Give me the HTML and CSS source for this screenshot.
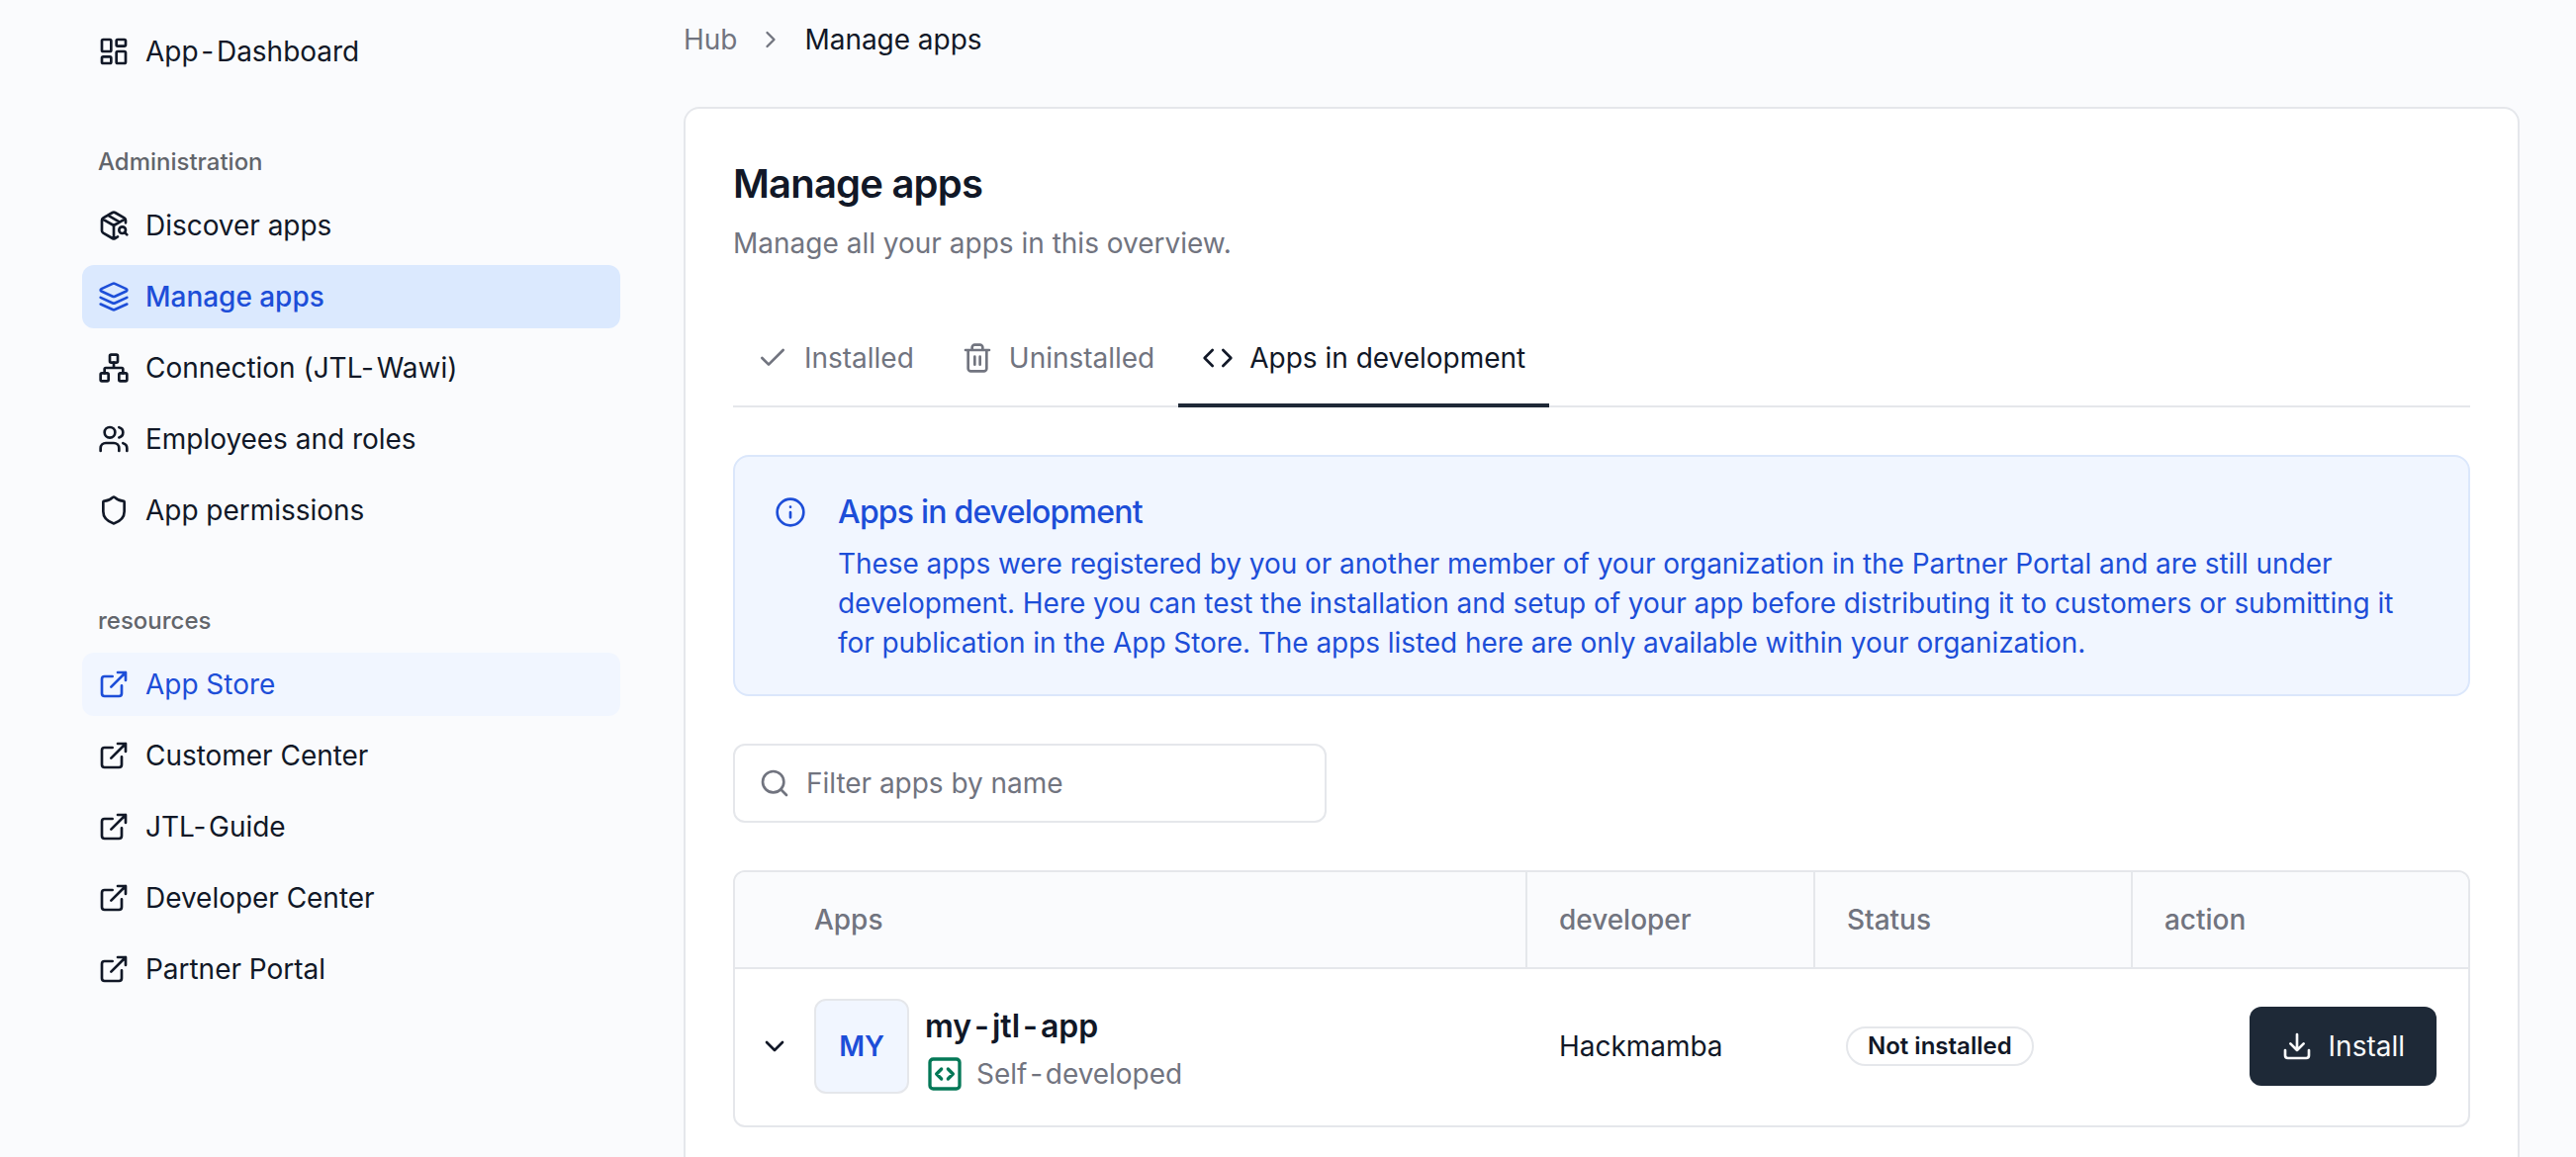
FILE: index.html
```html
<!DOCTYPE html>
<html lang="en">

<head>
    <meta charset="UTF-8">
    <meta name="viewport" content="width=device-width, initial-scale=1.0">
    <title>Manage apps</title>
    <link rel="stylesheet" href="styles.css">
</head>

<body>
    <!-- Shared icon shapes -->
    <svg class="sprite" aria-hidden="true">
        <symbol id="external" viewBox="0 0 24 24">
            <path d="M15 3h6v6M10 14 21 3M18 13v6a2 2 0 0 1-2 2H5a2 2 0 0 1-2-2V8a2 2 0 0 1 2-2h6" />
        </symbol>
    </svg>

    <aside class="sidebar">
        <nav class="nav-group">
            <a class="nav-item">
                <svg class="icon" viewBox="0 0 24 24"><rect x="3" y="3" width="7" height="9" rx="1" /><rect x="14" y="3" width="7" height="5" rx="1" /><rect x="14" y="12" width="7" height="9" rx="1" /><rect x="3" y="16" width="7" height="5" rx="1" /></svg>
                <span>App<span class="hyphen">-</span>Dashboard</span>
            </a>
        </nav>
        <nav class="nav-group">
            <div class="nav-label">Administration</div>
            <a class="nav-item">
                <svg class="icon" viewBox="0 0 24 24"><path d="M21 10V8a2 2 0 0 0-1-1.73l-7-4a2 2 0 0 0-2 0l-7 4A2 2 0 0 0 3 8v8a2 2 0 0 0 1 1.73l7 4a2 2 0 0 0 2 0l2-1.14M7.5 4.27l9 5.15M3.29 7 12 12l8.71-5M12 22V12" /><circle cx="18.5" cy="15.5" r="2.5" /><path d="M20.27 17.27 22 19" /></svg>
                <span>Discover apps</span>
            </a>
            <a class="nav-item active">
                <svg class="icon" viewBox="0 0 24 24"><path d="m12.83 2.18a2 2 0 0 0-1.66 0L2.6 6.08a1 1 0 0 0 0 1.83l8.58 3.91a2 2 0 0 0 1.66 0l8.58-3.9a1 1 0 0 0 0-1.83Z" /><path d="m22 17.65-9.17 4.16a2 2 0 0 1-1.66 0L2 17.65" /><path d="m22 12.65-9.17 4.16a2 2 0 0 1-1.66 0L2 12.65" /></svg>
                <span>Manage apps</span>
            </a>
            <a class="nav-item">
                <svg class="icon" viewBox="0 0 24 24"><rect x="16" y="16" width="6" height="6" rx="1" /><rect x="2" y="16" width="6" height="6" rx="1" /><rect x="9" y="2" width="6" height="6" rx="1" /><path d="M5 16v-3a1 1 0 0 1 1-1h12a1 1 0 0 1 1 1v3M12 12V8" /></svg>
                <span>Connection (JTL<span class="hyphen tight">-</span>Wawi)</span>
            </a>
            <a class="nav-item">
                <svg class="icon" viewBox="0 0 24 24"><path d="M16 21v-2a4 4 0 0 0-4-4H6a4 4 0 0 0-4 4v2" /><circle cx="9" cy="7" r="4" /><path d="M22 21v-2a4 4 0 0 0-3-3.87M16 3.13a4 4 0 0 1 0 7.75" /></svg>
                <span>Employees and roles</span>
            </a>
            <a class="nav-item">
                <svg class="icon" viewBox="0 0 24 24"><path d="M20 13c0 5-3.5 7.5-7.66 8.95a1 1 0 0 1-.67-.01C7.5 20.5 4 18 4 13V6a1 1 0 0 1 1-1c2 0 4.5-1.2 6.24-2.72a1.17 1.17 0 0 1 1.52 0C14.51 3.81 17 5 19 5a1 1 0 0 1 1 1z" /></svg>
                <span>App permissions</span>
            </a>
        </nav>
        <nav class="nav-group">
            <div class="nav-label">resources</div>
            <a class="nav-item hovered"><svg class="icon"><use href="#external" /></svg><span>App Store</span></a>
            <a class="nav-item"><svg class="icon"><use href="#external" /></svg><span>Customer Center</span></a>
            <a class="nav-item"><svg class="icon"><use href="#external" /></svg><span>JTL<span class="hyphen tight">-</span>Guide</span></a>
            <a class="nav-item"><svg class="icon"><use href="#external" /></svg><span>Developer Center</span></a>
            <a class="nav-item"><svg class="icon"><use href="#external" /></svg><span>Partner Portal</span></a>
        </nav>
    </aside>

    <main>
        <div class="breadcrumb">
            <span class="muted">Hub</span>
            <svg class="icon small muted" viewBox="0 0 24 24"><path d="m9 18 6-6-6-6" /></svg>
            <span>Manage apps</span>
        </div>

        <section class="card">
            <h1>Manage apps</h1>
            <p class="subtitle">Manage all your apps in this overview.</p>

            <div class="tabs">
                <div class="tab">
                    <svg class="icon" viewBox="0 0 24 24"><path d="M20 6 9 17l-5-5" /></svg>
                    <span>Installed</span>
                </div>
                <div class="tab">
                    <svg class="icon" viewBox="0 0 24 24"><path d="M3 6h18M19 6v14c0 1-1 2-2 2H7c-1 0-2-1-2-2V6M8 6V4c0-1 1-2 2-2h4c1 0 2 1 2 2v2M10 11v6M14 11v6" /></svg>
                    <span>Uninstalled</span>
                </div>
                <div class="tab selected">
                    <svg class="icon" viewBox="0 0 24 24"><path d="m16 18 6-6-6-6M8 6l-6 6 6 6" /></svg>
                    <span>Apps in development</span>
                </div>
            </div>

            <div class="alert">
                <svg class="icon" viewBox="0 0 24 24"><circle cx="12" cy="12" r="10" /><path d="M12 16v-4M12 8h.01" /></svg>
                <div>
                    <h2>Apps in development</h2>
                    <p>These apps were registered by you or another member of your organization in the Partner Portal and are still under development. Here you can test the installation and setup of your app before distributing it to customers or submitting it for publication in the App Store. The apps listed here are only available within your organization.</p>
                </div>
            </div>

            <div class="search">
                <svg class="icon" viewBox="0 0 24 24"><circle cx="11" cy="11" r="8" /><path d="m21 21-4.3-4.3" /></svg>
                <span>Filter apps by name</span>
            </div>

            <div class="table">
                <div class="row head">
                    <div class="cell first">Apps</div>
                    <div class="cell">developer</div>
                    <div class="cell">Status</div>
                    <div class="cell">action</div>
                </div>
                <div class="row">
                    <div class="cell app">
                        <svg class="icon" viewBox="0 0 24 24"><path d="m6 9 6 6 6-6" /></svg>
                        <div class="avatar">MY</div>
                        <div class="app-info">
                            <div class="app-name">my<span class="hyphen">-</span>jtl<span class="hyphen">-</span>app</div>
                            <div class="app-origin">
                                <svg class="icon large" viewBox="0 0 24 24"><path d="m10 9-3 3 3 3M14 15l3-3-3-3" /><rect x="3" y="3" width="18" height="18" rx="2" /></svg>
                                <span>Self<span class="hyphen">-</span>developed</span>
                            </div>
                        </div>
                    </div>
                    <div class="cell">Hackmamba</div>
                    <div class="cell"><span class="badge">Not installed</span></div>
                    <div class="cell action">
                        <button class="btn">
                            <svg class="icon" viewBox="0 0 24 24"><path d="M21 15v4a2 2 0 0 1-2 2H5a2 2 0 0 1-2-2v-4M7 10l5 5 5-5M12 15V3" /></svg>
                            <span>Install</span>
                        </button>
                    </div>
                </div>
            </div>
        </section>
    </main>
</body>

</html>
```

FILE: styles.css
```css
/* General Reset */
* {
    margin: 0;
    padding: 0;
    box-sizing: border-box;
}

body {
    font-family: Inter, sans-serif;
    font-size: 28px;
    line-height: 40px;
    letter-spacing: -0.03px;
    background: #fafbfd;
    color: #111827;
    display: flex;
    height: 100vh;
    overflow: hidden;
}

.sprite {
    display: none;
}

.icon {
    width: 32px;
    height: 32px;
    flex-shrink: 0;
    fill: none;
    stroke: currentColor;
    stroke-width: 2;
    stroke-linecap: round;
    stroke-linejoin: round;
}

.icon.small {
    width: 28px;
    height: 28px;
}

.icon.large {
    width: 40px;
    height: 40px;
}

.muted {
    color: #71747f;
}

.hyphen {
    margin: 0 0.1em;
}

/* After a capital L the gap is already wide enough */
.hyphen.tight {
    margin-left: 0;
}

/* Sidebar */
.sidebar {
    width: 627px;
    flex-shrink: 0;
    padding: 20px 0 0 83px;
    display: flex;
    flex-direction: column;
    gap: 48px;
}

.nav-item {
    display: flex;
    align-items: center;
    gap: 16px;
    height: 64px;
    padding: 0 16px;
    margin-bottom: 8px;
    border-radius: 12px;
}

.nav-item:last-child {
    margin-bottom: 0;
}

.nav-item.active {
    background: #dbe9fe;
    color: #1d4ed8;
    font-weight: 500;
}

.nav-item.hovered {
    background: #f1f6ff;
    color: #1d4ed8;
}

.nav-label {
    padding: 0 16px;
    font-size: 24px;
    font-weight: 500;
    line-height: 64px;
    letter-spacing: 0;
    color: #62656b;
}

/* Main column */
main {
    width: 1856px;
    margin-left: 64px;
    padding-top: 20px;
    display: flex;
    flex-direction: column;
}

.breadcrumb {
    display: flex;
    align-items: center;
    gap: 20px;
    height: 40px;
    margin-bottom: 48px;
}

.card {
    flex: 1;
    padding: 48px 48px 0;
    background: #fff;
    border: 2px solid #e5e7eb;
    border-bottom: none;
    border-radius: 16px 16px 0 0;
}

h1 {
    font-size: 40px;
    font-weight: 600;
    line-height: 56px;
    letter-spacing: -0.02em;
}

.subtitle {
    margin-top: 12px;
    letter-spacing: 0;
    color: #71747f;
}

/* Tabs */
.tabs {
    display: flex;
    height: 100px;
    margin: 46px 0 48px;
    box-shadow: inset 0 -2px #e5e7eb;
    letter-spacing: -0.01px;
    color: #71747f;
}

.tab {
    display: flex;
    align-items: center;
    gap: 16px;
    padding: 0 24px;
}

.tab.selected {
    color: #111827;
    box-shadow: inset 0 -4px #1f2937;
}

/* Info box */
.alert {
    display: flex;
    gap: 32px;
    padding: 32px 40px;
    background: #f1f6ff;
    border: 2px solid #dbe7fb;
    border-radius: 16px;
    color: #1d4ed8;
}

.alert .icon {
    margin-top: 8px;
}

.alert h2 {
    font-size: 32px;
    font-weight: 500;
    line-height: 48px;
    letter-spacing: -0.025em;
    margin-bottom: 8px;
}

.alert p {
    letter-spacing: -0.06px;
}

.search {
    display: flex;
    align-items: center;
    gap: 16px;
    width: 600px;
    height: 80px;
    margin: 48px 0;
    padding: 0 24px;
    border: 2px solid #e5e7eb;
    border-radius: 12px;
    color: #71747f;
}

/* Apps table */
.table {
    border: 2px solid #e5e7eb;
    border-radius: 12px;
    overflow: hidden;
}

.row {
    display: grid;
    grid-template-columns: 801px 291px 321px 1fr;
    align-items: center;
    height: 158px;
    padding-bottom: 2px;
}

.cell {
    padding: 0 32px;
}

.row.head {
    height: 98px;
    padding-bottom: 0;
    background: #fafbfd;
    border-bottom: 2px solid #e5e7eb;
    color: #71747f;
    font-weight: 500;
}

.head .cell {
    line-height: 96px;
    border-right: 2px solid #e5e7eb;
}

.head .cell:last-child {
    border-right: none;
}

.head .first {
    padding-left: 80px;
}

.app {
    display: flex;
    align-items: center;
    padding-left: 24px;
}

.avatar {
    display: flex;
    align-items: center;
    justify-content: center;
    width: 96px;
    height: 96px;
    margin: 0 16px 0 24px;
    background: #f1f6ff;
    border: 2px solid #e5e7eb;
    border-radius: 12px;
    color: #1d4ed8;
    font-weight: 600;
}

.app-name {
    font-size: 32px;
    font-weight: 600;
    line-height: 56px;
    letter-spacing: -0.1px;
}

.app-origin {
    display: flex;
    align-items: center;
    gap: 12px;
    color: #71747f;
}

.app-origin .icon {
    color: #047857;
}

.badge {
    display: block;
    width: fit-content;
    margin-left: -1px;
    padding: 0 20px;
    border: 2px solid #e5e7eb;
    border-radius: 20px;
    font-size: 24px;
    font-weight: 600;
    line-height: 36px;
    letter-spacing: 0;
}

.action {
    display: flex;
    justify-content: flex-end;
}

.btn {
    display: flex;
    align-items: center;
    gap: 16px;
    height: 80px;
    padding: 0 32px;
    background: #1e2937;
    color: #f9fafb;
    border: none;
    border-radius: 12px;
    font: inherit;
    cursor: pointer;
}
```
